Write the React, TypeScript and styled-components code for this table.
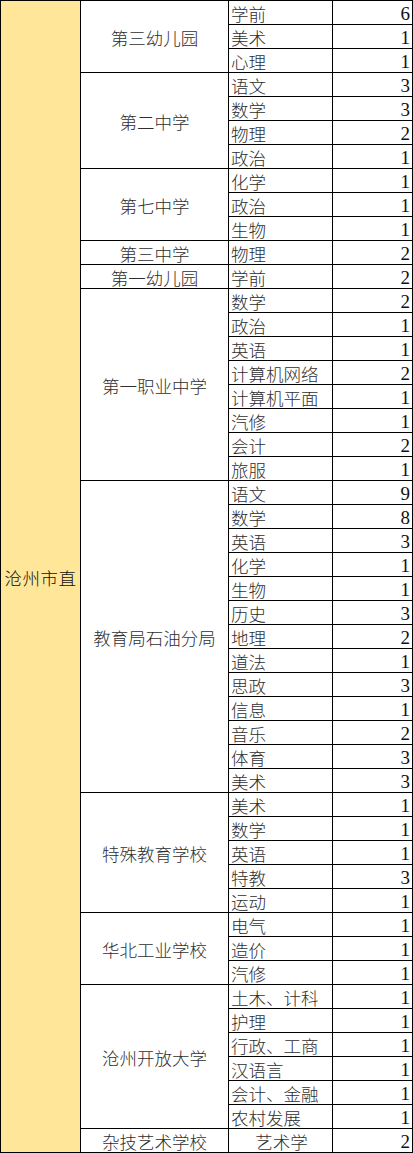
import React from "react";
import styled, { createGlobalStyle } from "styled-components";

type Group = { name: string; items: [string, number][]; centerSubject?: boolean };

const groups: Group[] = [
  { name: "第三幼儿园", items: [["学前", 6], ["美术", 1], ["心理", 1]] },
  { name: "第二中学", items: [["语文", 3], ["数学", 3], ["物理", 2], ["政治", 1]] },
  { name: "第七中学", items: [["化学", 1], ["政治", 1], ["生物", 1]] },
  { name: "第三中学", items: [["物理", 2]] },
  { name: "第一幼儿园", items: [["学前", 2]] },
  {
    name: "第一职业中学",
    items: [
      ["数学", 2], ["政治", 1], ["英语", 1], ["计算机网络", 2],
      ["计算机平面", 1], ["汽修", 1], ["会计", 2], ["旅服", 1],
    ],
  },
  {
    name: "教育局石油分局",
    items: [
      ["语文", 9], ["数学", 8], ["英语", 3], ["化学", 1], ["生物", 1],
      ["历史", 3], ["地理", 2], ["道法", 1], ["思政", 3], ["信息", 1],
      ["音乐", 2], ["体育", 3], ["美术", 3],
    ],
  },
  { name: "特殊教育学校", items: [["美术", 1], ["数学", 1], ["英语", 1], ["特教", 3], ["运动", 1]] },
  { name: "华北工业学校", items: [["电气", 1], ["造价", 1], ["汽修", 1]] },
  {
    name: "沧州开放大学",
    items: [
      ["土木、计科", 1], ["护理", 1], ["行政、工商", 1],
      ["汉语言", 1], ["会计、金融", 1], ["农村发展", 1],
    ],
  },
  { name: "杂技艺术学校", items: [["艺术学", 2]], centerSubject: true },
];

const totalRows = groups.reduce((n, g) => n + g.items.length, 0);

const GlobalStyle = createGlobalStyle`
  html, body {
    margin: 0;
    padding: 0;
    background: #ffffff;
  }
  body {
    font-family: "Noto Sans CJK SC", "Noto Sans", sans-serif;
  }
`;

const Sheet = styled.div<{ $rows: number }>`
  width: 413px;
  box-sizing: border-box;
  display: grid;
  grid-template-columns: 80px 148px 104px 80px;
  grid-template-rows: repeat(${(p) => p.$rows}, 24px);
  border-top: 1px solid #000;
  border-left: 1px solid #000;
  color: #2e2e2e;
  font-size: 17.5px;
  font-weight: 300;
`;

const Cell = styled.div<{ $start: number; $span?: number; $col: number }>`
  grid-column: ${(p) => p.$col};
  grid-row: ${(p) => p.$start} / span ${(p) => p.$span ?? 1};
  box-sizing: border-box;
  border-right: 1px solid #000;
  border-bottom: 1px solid #000;
  display: flex;
  align-items: center;
  padding-top: 3px;
  line-height: 20px;
  white-space: nowrap;
  overflow: hidden;
`;

const RegionCell = styled(Cell)`
  background: #ffe699;
  justify-content: center;
  color: #111;
  letter-spacing: 0.5px;
`;

const SchoolCell = styled(Cell)`
  justify-content: center;
`;

const SubjectCell = styled(Cell)<{ $center?: boolean }>`
  justify-content: ${(p) => (p.$center ? "center" : "flex-start")};
  padding-left: 2px;
`;

const CountCell = styled(Cell)`
  justify-content: flex-end;
  padding-right: 2px;
  font-family: "Liberation Serif", "Noto Sans CJK SC", serif;
  font-size: 19px;
  font-weight: 400;
  color: #111;
`;

export default function App() {
  let row = 1;
  const cells: React.ReactNode[] = [];
  groups.forEach((g, gi) => {
    const start = row;
    cells.push(
      <SchoolCell key={`s${gi}`} $col={2} $start={start} $span={g.items.length}>
        {g.name}
      </SchoolCell>
    );
    g.items.forEach(([subject, count], i) => {
      cells.push(
        <SubjectCell key={`t${gi}-${i}`} $col={3} $start={start + i} $center={g.centerSubject}>
          {subject}
        </SubjectCell>,
        <CountCell key={`c${gi}-${i}`} $col={4} $start={start + i}>
          {count}
        </CountCell>
      );
    });
    row += g.items.length;
  });

  return (
    <>
      <GlobalStyle />
      <Sheet $rows={totalRows}>
        <RegionCell $col={1} $start={1} $span={totalRows}>
          沧州市直
        </RegionCell>
        {cells}
      </Sheet>
    </>
  );
}
